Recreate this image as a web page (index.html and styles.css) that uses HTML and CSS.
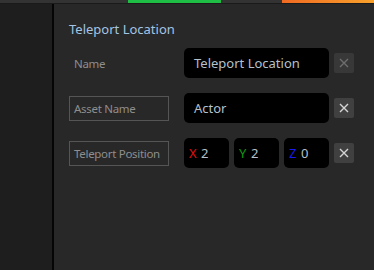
FILE: index.html
```html
<!DOCTYPE html>
<html lang="en">
<head>
    <meta charset="UTF-8">
    <title>Teleport Location</title>
    <link rel="stylesheet" href="styles.css">
</head>
<body>
    <!-- Top status strip -->
    <div class="strip">
        <span class="seg seg-dark" style="width: 128px"></span>
        <span class="seg seg-green" style="width: 93px"></span>
        <span class="seg seg-dark" style="width: 61px"></span>
        <span class="seg seg-orange"></span>
    </div>

    <div class="layout">
        <div class="sidebar"></div>

        <div class="panel">
            <h1 class="title">Teleport Location</h1>

            <div class="row">
                <div class="label plain">Name</div>
                <div class="field">Teleport Location</div>
                <button type="button" class="remove dim">
                    <svg width="10" height="10" viewBox="0 0 10 10"><path d="M1 1L9 9M9 1L1 9"/></svg>
                </button>
            </div>

            <div class="row">
                <div class="label">Asset Name</div>
                <div class="field">Actor</div>
                <button type="button" class="remove">
                    <svg width="10" height="10" viewBox="0 0 10 10"><path d="M1 1L9 9M9 1L1 9"/></svg>
                </button>
            </div>

            <div class="row">
                <div class="label">Teleport Position</div>
                <div class="vector">
                    <div class="field axis"><span class="ax ax-x">X</span>2</div>
                    <div class="field axis"><span class="ax ax-y">Y</span>2</div>
                    <div class="field axis"><span class="ax ax-z">Z</span>0</div>
                </div>
                <button type="button" class="remove">
                    <svg width="10" height="10" viewBox="0 0 10 10"><path d="M1 1L9 9M9 1L1 9"/></svg>
                </button>
            </div>
        </div>
    </div>
</body>
</html>
```

FILE: styles.css
```css
/* General */
body {
    margin: 0;
    padding: 0;
    width: 374px;
    height: 270px;
    overflow: hidden;
    background-color: #282828;
    font-family: 'Noto Sans', 'DejaVu Sans', sans-serif;
    display: flex;
    flex-direction: column;
}

/* Top strip */
.strip {
    display: flex;
    height: 3px;
    border-bottom: 1px solid #1a1a1a;
    flex-shrink: 0;
}

.seg {
    display: block;
    height: 3px;
}

.seg-dark {
    background-color: #333333;
}

.seg-green {
    background-color: #1fbf45;
}

.seg-orange {
    flex: 1;
    background: linear-gradient(90deg, #f06a22, #f8a12c);
}

/* Layout */
.layout {
    display: flex;
    flex: 1;
}

.sidebar {
    width: 52px;
    background-color: #1e1e1e;
    border-right: 2px solid #050505;
}

.panel {
    flex: 1;
    padding: 15px 0 0 15px;
}

.title {
    margin: 0 0 9px 0;
    font-size: 13px;
    font-weight: 400;
    line-height: 20px;
    color: #a4c4e2;
}

/* Rows */
.row {
    display: flex;
    align-items: center;
    height: 30px;
    margin-bottom: 15px;
}

.label {
    box-sizing: border-box;
    width: 100px;
    height: 25px;
    line-height: 23px;
    padding-left: 4px;
    border: 1px solid #555555;
    font-size: 11.5px;
    letter-spacing: -0.3px;
    color: #8e8e8e;
    white-space: nowrap;
    overflow: hidden;
}

.label.plain {
    border-color: transparent;
}

.field {
    box-sizing: border-box;
    width: 145px;
    height: 30px;
    margin-left: 15px;
    padding-left: 10px;
    line-height: 30px;
    background-color: #000000;
    border-radius: 5px;
    font-size: 13px;
    color: #b4c0cc;
}

.vector {
    display: flex;
    gap: 5px;
    width: 145px;
    margin-left: 15px;
}

.vector .axis {
    flex: 1;
    width: auto;
    margin-left: 0;
    padding-left: 5px;
}

.ax {
    display: inline-block;
    width: 12px;
}

.ax-x {
    color: #e01010;
}

.ax-y {
    color: #119911;
}

.ax-z {
    color: #1a1aee;
}

/* Remove buttons */
.remove {
    display: flex;
    align-items: center;
    justify-content: center;
    width: 20px;
    height: 20px;
    margin-left: 5px;
    padding: 0;
    border: none;
    border-radius: 2px;
    background-color: #404040;
    cursor: pointer;
}

.remove svg path {
    stroke: #d4d4d4;
    stroke-width: 1.4;
    fill: none;
}

.remove.dim {
    background-color: #383838;
}

.remove.dim svg path {
    stroke: #6e6e6e;
}
```
